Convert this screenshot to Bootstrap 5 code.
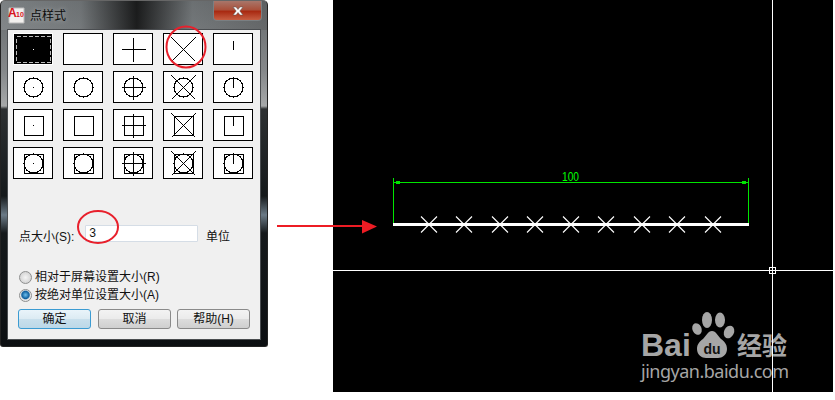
<!DOCTYPE html>
<html>

<head>
  <meta charset="utf-8">
  <meta name="viewport" content="width=device-width">
  <title>点样式</title>
  <link href="https://cdn.jsdelivr.net/npm/bootstrap@5.3.3/dist/css/bootstrap.min.css" rel="stylesheet" type="text/css" />
  <style>
    html, body { height: 400px; overflow: hidden; background: #fff; }
    body { font-family: "Liberation Sans", "Noto Sans CJK SC", sans-serif; font-size: 12px; color: #111; }
    .page { width: 835px; height: 400px; }

    /* dialog frame */
    .dlg {
      width: 268px; height: 347px; flex: none; padding: 0 6px 6px 6px;
      border: 1px solid #222; border-top-color: #666; border-radius: 5px 5px 3px 3px;
      background:
        linear-gradient(to right, rgba(150,155,158,.45) 0, rgba(120,125,128,.3) 30%, rgba(0,0,0,.75) 51%, rgba(120,125,128,.3) 72%, rgba(70,70,70,.3) 100%) top / 100% 29px no-repeat,
        linear-gradient(to bottom, #666a6c 0, #85888a 70px, #a6a8a9 105px, #2d3032 108px, #15191b 195px, #6b7a86 214px, #15191b 232px, #0c0f12 100%);
    }
    .dlg-title { height: 28px; }
    .dlg-title span { margin-left: 23px; margin-top: 2px; font-size: 12px; line-height: 12px; color: #0c0c0c; text-shadow: 0 0 5px rgba(255,255,255,.45); }
    .dlg-icon { position: absolute; left: 7px; top: 6px; }
    .dlg-close {
      position: absolute; left: 212px; top: 0; width: 49px; height: 20px;
      border: 1px solid #7a7f82; border-top: 0; border-radius: 0 0 4px 4px;
      background: linear-gradient(to bottom, #a8766a 0, #a9513c 45%, #a92a12 55%, #c75e42 100%);
    }
    .dlg-body { height: 311px; background: #f0f0f0; border: 1px solid #4a4d50; padding: 3px 5px 0 5px; }

    /* point style grid */
    .pt-grid { display: grid; grid-template-columns: repeat(5, 40px); grid-auto-rows: 32px; gap: 6px 10px; }
    .pt-cell { background: #fff; border: 1px solid #000; }
    .pt-cell svg { display: block; }
    .pt-cell.is-sel { background: #000; border-color: #fff; outline: 1px solid #f0f0f0; }

    /* form rows */
    .size-row { margin: 46px 0 0 6px; height: 17px; }
    .size-label { width: 66px; white-space: nowrap; padding-top: 6px; }
    .size-input.form-control {
      width: 113px; height: 17px; min-height: 0; padding: 0 3px; font-size: 12px; line-height: 15px;
      border: 1px solid #d5dde6; border-radius: 1px; color: #111; font-family: "Liberation Mono", monospace;
    }
    .size-unit { margin-left: 8px; padding-top: 6px; }
    .radio-list { margin: 26px 0 0 6px; }
    .radio-row { height: 18px; gap: 3px; }
    .radio-row input {
      appearance: none; width: 13px; height: 13px; margin: 0; border-radius: 50%;
      border: 1px solid #8e8f8f; background: radial-gradient(circle, #f4f4f4 0, #d6d6d6 70%);
    }
    .radio-row input:checked { background: radial-gradient(circle at 50% 45%, #6fc0ee 0, #0f5f9e 45%, #e8e8e8 60%); }
    .btn-row { margin: 5px 0 0 5px; gap: 6px; }
    .dlg-btn.btn {
      width: 73px; height: 20px; padding: 0; font-size: 12px; line-height: 18px; color: #111;
      border: 1px solid #8a8a8a; border-radius: 3px;
      background: linear-gradient(to bottom, #f3f3f3 0, #ebebeb 48%, #dcdcdc 52%, #cfcfcf 100%);
    }
    .dlg-btn.is-default { border-color: #3b9bd2; margin-right: 1px; background: linear-gradient(to bottom, #e9f4fa 0, #dcebf3 48%, #c8dfec 52%, #bcd8e8 100%); }

    /* cad view */
    .cad { width: 500px; height: 392px; margin-left: 65px; flex: none; background: #000; }
    .cad svg { display: block; }
    .overlay { position: absolute; left: 0; top: 0; pointer-events: none; }
  </style>
</head>

<body>
  <div class="page d-flex align-items-start position-relative">

    <div class="dlg position-relative">
      <div class="dlg-title d-flex align-items-center">
        <svg class="dlg-icon" width="17" height="17" viewBox="0 0 17 17">
          <path d="M1 1h15v15H1z" fill="#f2f0ee" stroke="#bbb" />
          <text x="0" y="10" font-family="Liberation Sans" font-weight="700" font-size="12" fill="#d8141c">A</text>
          <text x="8" y="10" font-family="Liberation Sans" font-weight="700" font-size="7" fill="#d8141c">10</text>
        </svg>
        <span>点样式</span>
      </div>
      <div class="dlg-close d-flex align-items-center justify-content-center">
        <svg width="12" height="10" viewBox="0 0 12 10"><path d="M1 1h3l2 2.500 2-2.500h3L7.800 5 11 9H8L6 6.500 4 9H1l3.200-4z" fill="#fff" stroke="#555" stroke-width=".5" /></svg>
      </div>

      <div class="dlg-body">
        <div id="ptGrid" class="pt-grid"></div>

        <div class="size-row d-flex align-items-center">
          <span class="size-label">点大小(S):</span>
          <input class="size-input form-control" type="text" value="3">
          <span class="size-unit">单位</span>
        </div>

        <div class="radio-list">
          <label class="radio-row d-flex align-items-center"><input type="radio" name="mode"><span>相对于屏幕设置大小(R)</span></label>
          <label class="radio-row d-flex align-items-center"><input type="radio" name="mode" checked><span>按绝对单位设置大小(A)</span></label>
        </div>

        <div class="btn-row d-flex">
          <button class="dlg-btn is-default btn" type="button">确定</button>
          <button class="dlg-btn btn" type="button">取消</button>
          <button class="dlg-btn btn" type="button">帮助(H)</button>
        </div>
      </div>
    </div>

    <div class="cad">
      <svg id="cadView" width="500" height="392" viewBox="333 0 500 392">
        <!-- watermark -->
        <g fill="#a6a6a6">
          <text x="641" y="356" font-family="Liberation Sans" font-weight="700" font-size="32">Bai</text>
          <ellipse cx="697" cy="329" rx="4.500" ry="6" transform="rotate(-25 697 329)" />
          <ellipse cx="707" cy="320" rx="5" ry="8" />
          <ellipse cx="720" cy="320" rx="5" ry="7.500" />
          <ellipse cx="729" cy="332" rx="5" ry="6.500" transform="rotate(25 729 332)" />
          <path d="M712 331c-4 0-6 5-9 8-3 2-6 5-6 10 0 6 5 9 9 9h12c4 0 9-3 9-9 0-5-3-8-6-10-3-3-5-8-9-8z" />
          <text x="737" y="355" font-family="Noto Sans CJK SC" font-weight="700" font-size="25">经验</text>
          <text x="641" y="378" font-family="Noto Sans" font-size="18" textLength="148" lengthAdjust="spacing">jingyan.baidu.com</text>
        </g>
        <text x="712" y="354" text-anchor="middle" font-family="Liberation Sans" font-weight="700" font-size="14" fill="#111">du</text>

        <!-- dimension -->
        <g stroke="#00e600" shape-rendering="crispEdges">
          <path d="M393.500 178V224M748.500 178V224M394 182.500H748" fill="none" />
          <path d="M396 181h4v3h-4zM742 181h4v3h-4z" fill="#00e600" stroke="none" />
        </g>
        <text x="562" y="181" font-family="Liberation Sans" font-size="12" fill="#0f0" textLength="17" lengthAdjust="spacingAndGlyphs">100</text>

        <!-- line with points -->
        <rect x="393" y="223" width="356" height="3" fill="#fff" />
        <g id="cadPoints" stroke="#fff" stroke-width="1.1"></g>

        <!-- crosshair -->
        <path d="M772.500 0V392M333 270.500H833M769.500 267.500h6v6h-6z" fill="none" stroke="#fff" shape-rendering="crispEdges" />
      </svg>
    </div>

    <svg class="overlay" width="835" height="400" viewBox="0 0 835 400">
      <ellipse cx="186" cy="47" rx="19.500" ry="20.500" fill="none" stroke="#e8202c" stroke-width="2" />
      <ellipse cx="98" cy="227" rx="20" ry="16" fill="none" stroke="#e8202c" stroke-width="2" />
      <path d="M277 225h86v2h-86z" fill="#ed1c24" />
      <path d="M362 220l15 6.500-15 7z" fill="#ed1c24" />
    </svg>
  </div>

  <script src="https://cdn.jsdelivr.net/npm/bootstrap@5.3.3/dist/js/bootstrap.bundle.min.js"></script>
  <script>
    // center of a 40x32 cell, borders included
    const cx = 20.5, cy = 16.5;
    const marks = [
      `<rect x="${cx - 0.5}" y="${cy - 0.5}" width="1" height="1" fill="#000" stroke="none"/>`,
      '',
      `<path d="M${cx - 12} ${cy}H${cx + 12}M${cx} ${cy - 12}V${cy + 12}"/>`,
      `<path d="M${cx - 12} ${cy - 12}L${cx + 12} ${cy + 12}M${cx + 12} ${cy - 12}L${cx - 12} ${cy + 12}"/>`,
      `<path d="M${cx} ${cy - 9}V${cy}"/>`
    ];
    const shapes = [
      '',
      `<circle cx="${cx}" cy="${cy}" r="9.5" stroke-width="1.3"/>`,
      `<rect x="${cx - 9.5}" y="${cy - 9.5}" width="19" height="19"/>`,
      `<circle cx="${cx}" cy="${cy}" r="9.5" stroke-width="1.3"/><rect x="${cx - 9.5}" y="${cy - 9.5}" width="19" height="19"/>`
    ];

    const grid = document.getElementById("ptGrid");
    for (let r = 0; r < 4; r++) {
      for (let c = 0; c < 5; c++) {
        const cell = document.createElement('div');
        cell.className = 'pt-cell';
        let inner = shapes[r] + marks[c];
        if (r === 0 && c === 0) {
          cell.classList.add('is-sel');
          inner = `<rect x="3.5" y="3.5" width="34" height="26" stroke="#bbb" stroke-dasharray="4 2"/>` +
            `<rect x="20" y="16" width="1" height="1" fill="#fff" stroke="none"/>`;
        }
        cell.innerHTML = `<svg width="38" height="30" viewBox="1 1 38 30" fill="none" stroke="#000" shape-rendering="crispEdges">${inner}</svg>`;
        grid.appendChild(cell);
      }
    }

    const pts = [429, 464, 500, 535, 571, 606, 642, 677, 713];
    document.getElementById("cadPoints").innerHTML = pts.map(x =>
      `<path d="M${x - 8} 216.500L${x + 8} 232.500M${x + 8} 216.500L${x - 8} 232.500"/>`
    ).join('');
  </script>
</body>
</html>
